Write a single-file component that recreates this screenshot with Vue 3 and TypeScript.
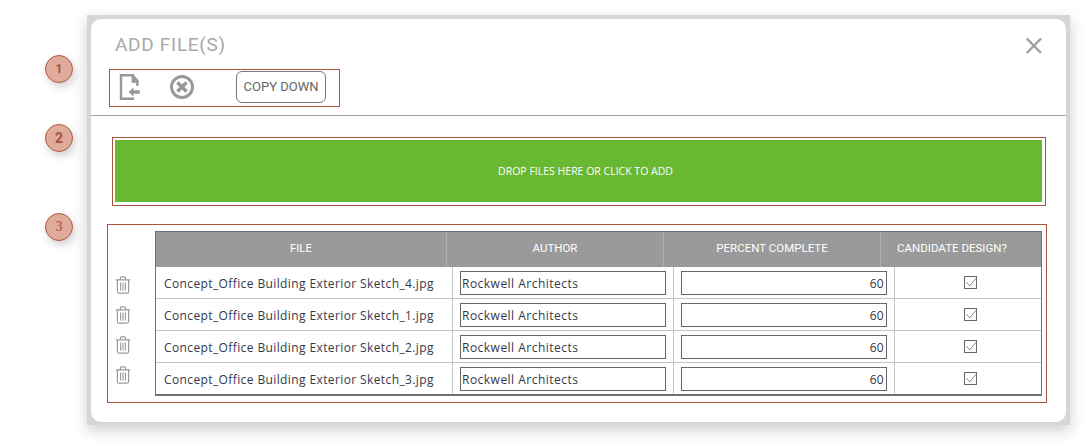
<script setup lang="ts">
const rows = ['4', '1', '2', '3'].map((n) => `Concept_Office Building Exterior Sketch_${n}.jpg`)
const badges = [
  { n: '1', cls: 'b1' },
  { n: '2', cls: 'b2' },
  { n: '3', cls: 'b3' },
]
</script>

<template>
  <div class="page">
    <div v-for="b in badges" :key="b.n" class="badge" :class="b.cls">{{ b.n }}</div>
    <div class="modal">
      <div class="card">
        <header class="head">
          <h1 class="title">ADD FILE(S)</h1>
          <svg class="close" width="18" height="18" viewBox="0 0 18 18">
            <path d="M2.8 1.5L17 16M17 1.5L2.8 16" stroke="#a0a0a0" stroke-width="2.5" fill="none" />
          </svg>
          <div class="toolbar">
            <svg class="ic-file" width="22" height="26" viewBox="0 0 22 26">
              <path d="M14 8.5V1.2H2V24.8H15" fill="none" stroke="#999" stroke-width="2.4" />
              <path d="M13.5 1.2L18.4 6.8V12" fill="none" stroke="#999" stroke-width="2.4" />
              <path d="M13.2 2V8.4H18.6" fill="#999" stroke="#999" stroke-width="0.6" />
              <path d="M9.5 18L14.5 13.4V16.2H20.8V19.8H14.5V22.6Z" fill="#999" />
            </svg>
            <svg class="ic-x" width="26" height="26" viewBox="0 0 26 26">
              <circle cx="13" cy="13" r="10.5" fill="none" stroke="#999" stroke-width="3" />
              <path d="M8.4 8.4L17.6 17.6M17.6 8.4L8.4 17.6" stroke="#999" stroke-width="3.6" fill="none" />
            </svg>
            <button class="copy" type="button">COPY DOWN</button>
          </div>
        </header>

        <div class="rule"></div>

        <div class="drop-frame">
          <div class="drop">DROP FILES HERE OR CLICK TO ADD</div>
        </div>

        <section class="frame">
          <div class="trash-col">
            <svg v-for="r in rows" :key="r" class="trash" width="16" height="18" viewBox="0 0 16 18">
              <path d="M0.8 3.8H15.2M5.4 3.5V2.2C5.4 1.3 6 .8 6.8 .8H9.2C10 .8 10.6 1.3 10.6 2.2V3.5" fill="none" stroke="#9a9a9a" stroke-width="1.2" />
              <path d="M2.4 4V15.4C2.4 16.6 3.1 17.2 4.2 17.2H11.8C12.9 17.2 13.6 16.6 13.6 15.4V4" fill="none" stroke="#9a9a9a" stroke-width="1.2" />
              <path d="M5.6 6.6V14.6M8 6.6V14.6M10.4 6.6V14.6" fill="none" stroke="#9a9a9a" stroke-width="1.1" />
            </svg>
          </div>
          <div class="table">
            <div class="thead">
              <div class="th">FILE</div>
              <div class="th">AUTHOR</div>
              <div class="th">PERCENT COMPLETE</div>
              <div class="th last">CANDIDATE DESIGN?</div>
            </div>
            <div v-for="r in rows" :key="r" class="tr">
              <div class="td name">{{ r }}</div>
              <div class="td"><div class="input">Rockwell Architects</div></div>
              <div class="td"><div class="input num">60</div></div>
              <div class="td check">
                <svg width="13" height="13" viewBox="0 0 13 13">
                  <rect x="0.5" y="0.5" width="12" height="12" fill="#fff" stroke="#666" />
                  <path d="M2.4 6.4L5.8 9.8L12.4 2" fill="none" stroke="#808080" stroke-width="1" />
                </svg>
              </div>
            </div>
          </div>
        </section>
      </div>
    </div>
  </div>
</template>

<style scoped>
.page {
  position: relative;
  width: 1089px;
  height: 448px;
  overflow: hidden;
  background: #fff;
  font-family: Roboto, "Liberation Sans", sans-serif;
}
.badge {
  position: absolute;
  left: 45px;
  width: 28px;
  height: 28px;
  box-sizing: border-box;
  border-radius: 50%;
  background: #e0ab9a;
  border: 1px solid #ad5a3e;
  color: #a5523a;
  font-size: 12px;
  font-weight: 700;
  line-height: 26px;
  text-align: center;
  box-shadow: 2px 4px 8px rgba(0, 0, 0, 0.18);
}
.b1 { top: 55px; }
.b2 { top: 124px; font-size: 14px; }
.b3 { top: 213px; font-family: "Liberation Serif", serif; font-weight: 400; font-size: 14px; }
.modal {
  position: absolute;
  left: 87px;
  top: 15px;
  width: 983px;
  height: 410px;
  box-sizing: border-box;
  padding: 4px 4px 3px 4px;
  background: #d6d6d6;
  box-shadow: 0 5px 14px rgba(0, 0, 0, 0.2);
}
.card {
  height: 403px;
  box-sizing: border-box;
  background: #fff;
  border-radius: 10px;
  display: flex;
  flex-direction: column;
}
.head {
  position: relative;
  height: 96px;
  padding: 15px 0 0 18px;
  box-sizing: border-box;
}
.title {
  margin: 0 0 0 6px;
  font-size: 19px;
  line-height: 22px;
  font-weight: 400;
  color: #a9a9a9;
  letter-spacing: 0.7px;
}
.close {
  position: absolute;
  right: 24px;
  top: 18px;
}
.toolbar {
  margin-top: 13px;
  width: 231px;
  height: 38px;
  box-sizing: border-box;
  border: 1px solid #a8553a;
  display: flex;
  align-items: center;
  padding-left: 9px;
}
.ic-file { margin-top: -2px; }
.ic-x { margin-left: 28px; margin-top: -2px; }
.copy {
  margin-left: 41px;
  margin-top: -3px;
  width: 90px;
  height: 32px;
  padding: 0;
  background: #fff;
  border: 1px solid #777;
  border-radius: 6px;
  font-family: inherit;
  font-size: 13px;
  color: #666;
}
.rule {
  height: 1px;
  background: #a0a0a0;
}
.drop-frame {
  margin: 21px 0 0 21px;
  width: 934px;
  height: 69px;
  box-sizing: border-box;
  border: 1px solid #a8553a;
  padding: 2px 3px 3px 2px;
}
.drop {
  height: 62px;
  padding-left: 14px;
  box-sizing: border-box;
  background: #69b832;
  color: #fff;
  font-family: "Open Sans", sans-serif;
  font-size: 10.5px;
  display: flex;
  align-items: center;
  justify-content: center;
}
.frame {
  margin: 18px 0 0 16px;
  width: 940px;
  height: 179px;
  box-sizing: border-box;
  border: 1px solid #a8553a;
  display: flex;
  padding: 6px 4px 0 0;
}
.trash-col {
  width: 47px;
  padding: 45px 0 0 7px;
  box-sizing: border-box;
  display: flex;
  flex-direction: column;
  gap: 12px;
}
.trash { display: block; }
.table {
  width: 887px;
  height: 165px;
  box-sizing: border-box;
  border: 1px solid #707070;
  border-bottom-width: 2px;
}
.thead {
  display: grid;
  grid-template-columns: 291px 217px 217px 1fr;
  height: 35px;
  background: #9a9a9a;
}
.th {
  color: #fff;
  font-size: 11.5px;
  line-height: 33px;
  text-align: center;
  border-right: 1px solid #b0b0b0;
}
.th.last { border-right: 0; padding-right: 18px; }
.tr {
  display: grid;
  grid-template-columns: 297px 221px 221px 1fr;
  height: 32px;
  box-sizing: border-box;
  border-bottom: 1px solid #c4c4c4;
}
.tr:last-child { border-bottom: 0; height: 31px; }
.td {
  display: flex;
  align-items: center;
  padding: 0 7px;
  box-sizing: border-box;
  border-right: 1px solid #c4c4c4;
  font-family: "Open Sans", sans-serif;
  font-size: 12px;
  color: #33384a;
}
.td:last-child { border-right: 0; }
.name {
  padding-left: 8px;
  padding-top: 2px;
  letter-spacing: 0.39px;
  white-space: nowrap;
}
.input {
  flex: 1;
  height: 24px;
  box-sizing: border-box;
  border: 1px solid #666;
  padding: 0 1px;
  line-height: 24px;
  letter-spacing: 0.48px;
  white-space: nowrap;
}
.num { text-align: right; letter-spacing: 0.3px; padding-right: 2px; }
.check { justify-content: center; padding: 0 0 0 5px; }
</style>
<style>
html, body { background: #fff; }
</style>
